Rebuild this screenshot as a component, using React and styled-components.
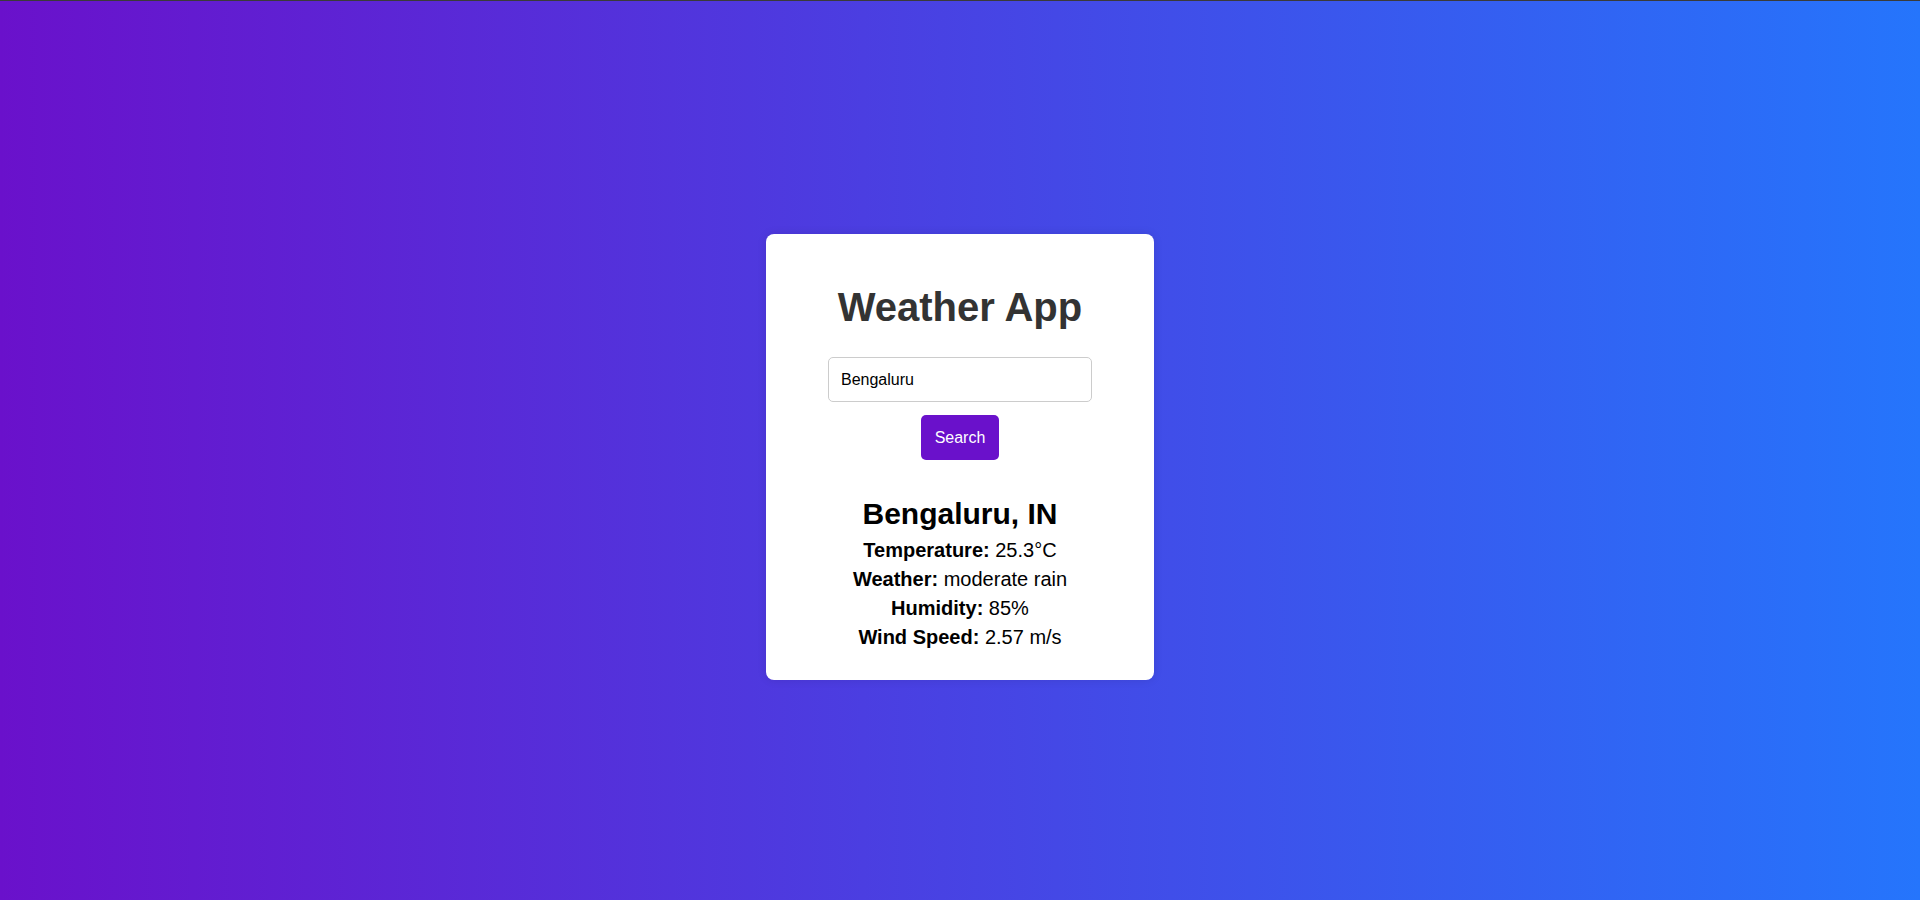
import React, { useState } from "react";
import styled, { createGlobalStyle } from "styled-components";

const GlobalStyle = createGlobalStyle`
  html,
  body {
    margin: 0;
    padding: 0;
  }
  body {
    font-family: "Liberation Sans", Arial, sans-serif;
  }
`;

const weatherData = {
  city: "Bengaluru",
  country: "IN",
  temp: 25.3,
  description: "moderate rain",
  humidity: 85,
  wind: 2.57,
};

const App = () => {
  const [city, setCity] = useState("Bengaluru");
  const [weather] = useState(weatherData);

  return (
    <>
      <GlobalStyle />
      <StPage>
        <StCard>
          <StTitle>Weather App</StTitle>
          <StInput
            type="text"
            value={city}
            placeholder="Enter city"
            onChange={(e) => setCity(e.target.value)}
          />
          <StButton>Search</StButton>
          {weather && (
            <StResult>
              <StCity>
                {weather.city}, {weather.country}
              </StCity>
              <StInfo>
                <b>Temperature:</b> {weather.temp}°C
              </StInfo>
              <StInfo>
                <b>Weather:</b> {weather.description}
              </StInfo>
              <StInfo>
                <b>Humidity:</b> {weather.humidity}%
              </StInfo>
              <StInfo>
                <b>Wind Speed:</b> {weather.wind} m/s
              </StInfo>
            </StResult>
          )}
        </StCard>
      </StPage>
    </>
  );
};

export default App;

const StPage = styled.div`
  box-sizing: border-box;
  height: 100vh;
  padding-top: 13px;
  border-top: 1px solid #3a3a3a;
  display: flex;
  align-items: center;
  justify-content: center;
  background: linear-gradient(to right, #6a11cb, #2575fc);
`;

const StCard = styled.div`
  box-sizing: border-box;
  width: 388px;
  padding: 50px 20px 31px;
  background-color: white;
  border-radius: 8px;
  box-shadow: 0 0 10px rgba(0, 0, 0, 0.1);
  display: flex;
  flex-direction: column;
  align-items: center;
  text-align: center;
`;

const StTitle = styled.h1`
  margin: 0 0 27px;
  font-size: 40px;
  line-height: 46px;
  font-weight: bold;
  color: #333;
`;

const StInput = styled.input`
  box-sizing: border-box;
  width: 264px;
  height: 45px;
  padding: 12px;
  margin: 0 0 13px;
  font-family: inherit;
  font-size: 16px;
  line-height: 19px;
  color: black;
  border: 1px solid #ccc;
  border-radius: 5px;
  outline: none;
`;

const StButton = styled.button`
  box-sizing: border-box;
  height: 45px;
  padding: 0 13.5px;
  font-family: inherit;
  font-size: 16px;
  color: white;
  background-color: #6a11cb;
  border: none;
  border-radius: 5px;

  &:hover {
    cursor: pointer;
    background-color: #5a0fb0;
  }
`;

const StResult = styled.div`
  margin-top: 37px;
  display: flex;
  flex-direction: column;
  align-items: center;
  gap: 6px;
  color: black;
`;

const StCity = styled.h2`
  margin: 0 0 2px;
  font-size: 30px;
  line-height: 34px;
  font-weight: bold;
`;

const StInfo = styled.p`
  margin: 0;
  font-size: 20px;
  line-height: 23px;
`;
